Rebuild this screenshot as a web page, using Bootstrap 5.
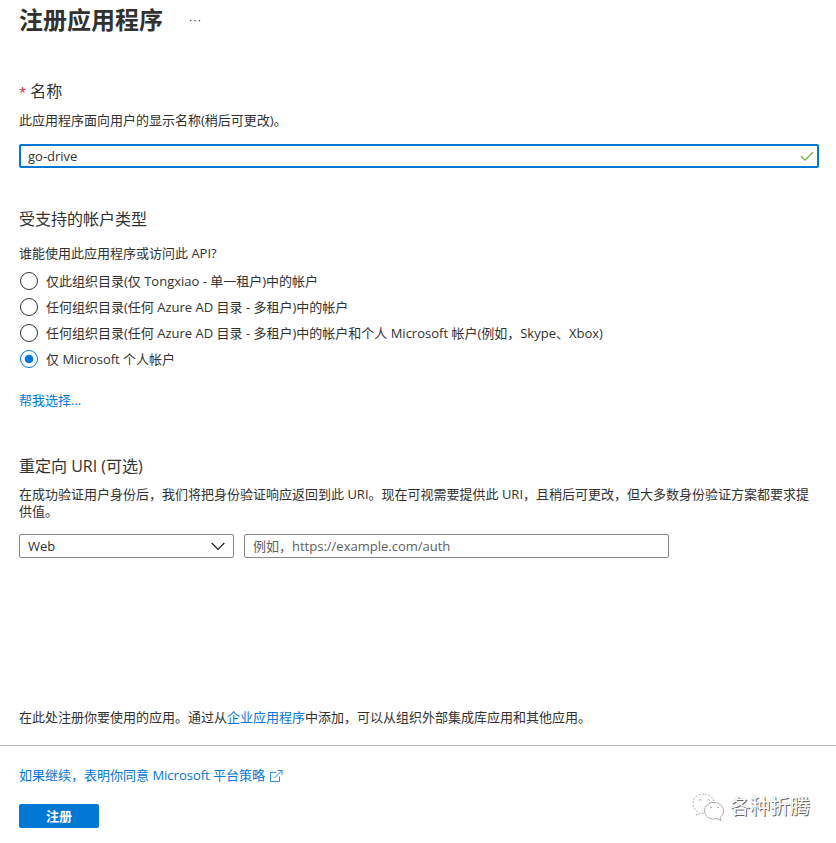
<!DOCTYPE html>
<html lang="zh-CN">
<head>
<meta charset="utf-8">
<meta name="viewport" content="width=device-width, initial-scale=1">
<title>注册应用程序</title>
<link href="https://cdn.jsdelivr.net/npm/bootstrap@5.3.0/dist/css/bootstrap.min.css" rel="stylesheet">
<style>
  :root { --ink: #323130; --azure: #0078d4; --line: #8a8886; }
  body { font: 13px/17px "Open Sans", "Noto Sans CJK SC", sans-serif; color: var(--ink); background: #fff; }
  a { color: var(--azure); text-decoration: none; }
  a:hover { text-decoration: underline; }
  .page-pad { padding-left: 19px; padding-right: 17px; }
  .page-title { font-size: 24px; line-height: 40px; font-weight: 700; }
  .section-title { font-size: 16px; line-height: 24px; font-weight: 400; margin: 0; }
  .section-gap { margin-top: 39px; }
  .section-gap-lg { margin-top: 45px; }
  .required-star { font-size: 13px; color: #e81123; }
  .form-control, .form-select { height: 24px; min-height: 24px; padding: 0 8px; font-size: 13px; line-height: 20px; color: var(--ink); border: 1px solid var(--line); border-radius: 2px; }
  .form-control::placeholder { color: #605e5c; opacity: 1; }
  .form-select { padding-right: 28px; background-position: right 8px center; background-size: 14px 14px;
    background-image: url("data:image/svg+xml,%3Csvg xmlns='http://www.w3.org/2000/svg' viewBox='0 0 14 14'%3E%3Cpath fill='none' stroke='%23201f1e' stroke-width='1.2' d='M.7 4l6.3 6.3L13.3 4'/%3E%3C/svg%3E"); }
  .name-row { margin-top: 15px; }
  .name-input, .name-input:focus { border: 2px solid var(--azure); padding: 0 30px 0 7px; box-shadow: none; }
  .valid-tick { right: 5px; top: 5px; }
  .kind-question { margin-top: 14px; margin-bottom: 6px; }
  .form-check { min-height: 26px; margin: 0; padding: 0 0 0 1px; gap: 8px; }
  .form-check .form-check-input { float: none; flex: none; width: 18px; height: 18px; margin: 0; border: 1px solid var(--ink); }
  .form-check .form-check-input:checked { border-color: var(--azure); background-color: #fff; background-size: 100% 100%;
    background-image: url("data:image/svg+xml,%3Csvg xmlns='http://www.w3.org/2000/svg' viewBox='0 0 16 16'%3E%3Ccircle cx='8' cy='8' r='4.3' fill='%230078d4'/%3E%3C/svg%3E"); }
  .help-line { margin-top: 20px; }
  .uri-row { margin-top: 14px; gap: 10px; }
  .more-btn { margin-left: 26px; line-height: 0; }
  .type-col { flex: 0 1 215px; }
  .uri-col { flex: 0 1 425px; }
  .enterprise-note { margin-top: 151px; margin-bottom: 19px; }
  .page-footer { border-top: 1px solid #bdbbb9; padding-top: 21px; }
  .register-btn { width: 80px; height: 24px; padding: 0; font-size: 13px; line-height: 22px; font-weight: 700; color: #fff; background: var(--azure); border-radius: 2px; margin-top: 20px; }
  .register-btn:hover { background: #106ebe; color: #fff; }
  .account-mark { font-size: 20px; line-height: 30px; color: #fff; padding-right: 9px; padding-bottom: 6px; gap: 6px; text-shadow: 1px 1px 0 #666, 0 0 1px #aaa; }
</style>
</head>
<body>
<main>
  <header class="page-pad d-flex align-items-center">
    <h1 class="page-title m-0">注册应用程序</h1>
    <button type="button" class="more-btn btn p-0 border-0" aria-label="更多">
      <svg width="12" height="4" viewBox="0 0 12 4" fill="#484644"><path d="M1 2h1.3v1.3H1zM5.4 2h1.3v1.3H5.4zM9.8 2h1.3v1.3H9.8z"/></svg>
    </button>
  </header>

  <form>
    <section class="page-pad section-gap">
      <h2 class="section-title"><label for="appName"><span class="required-star">*</span> 名称</label></h2>
      <p class="mt-2 mb-0" id="nameHelp">此应用程序面向用户的显示名称(稍后可更改)。</p>
      <div class="name-row position-relative">
        <input class="form-control name-input" id="appName" type="text" value="go-drive" aria-describedby="nameHelp">
        <svg class="valid-tick position-absolute" width="14" height="14" viewBox="0 0 14 14" fill="none" stroke="#6bb13c" stroke-width="1.3" aria-hidden="true"><path d="M1 7.200l4 4 8-8"/></svg>
      </div>
    </section>

    <section class="page-pad section-gap">
      <h2 class="section-title" id="kindTitle">受支持的帐户类型</h2>
      <p class="kind-question">谁能使用此应用程序或访问此 API?</p>
      <div role="radiogroup" aria-labelledby="kindTitle">
        <div class="form-check d-flex align-items-center"><input class="form-check-input" type="radio" name="kind" id="k1"><label for="k1">仅此组织目录(仅 Tongxiao - 单一租户)中的帐户</label></div>
        <div class="form-check d-flex align-items-center"><input class="form-check-input" type="radio" name="kind" id="k2"><label for="k2">任何组织目录(任何 Azure AD 目录 - 多租户)中的帐户</label></div>
        <div class="form-check d-flex align-items-center"><input class="form-check-input" type="radio" name="kind" id="k3"><label for="k3">任何组织目录(任何 Azure AD 目录 - 多租户)中的帐户和个人 Microsoft 帐户(例如，Skype、Xbox)</label></div>
        <div class="form-check d-flex align-items-center"><input class="form-check-input" type="radio" name="kind" id="k4" checked><label for="k4">仅 Microsoft 个人帐户</label></div>
      </div>
      <p class="help-line mb-0"><a href="#help">帮我选择...</a></p>
    </section>

    <section class="page-pad section-gap-lg">
      <h2 class="section-title">重定向 URI (可选)</h2>
      <p class="mt-2 mb-0">在成功验证用户身份后，我们将把身份验证响应返回到此 URI。现在可视需要提供此 URI，且稍后可更改，但大多数身份验证方案都要求提供值。</p>
      <div class="uri-row d-flex">
        <div class="type-col"><select class="form-select" aria-label="平台类型"><option>Web</option></select></div>
        <div class="uri-col"><input class="form-control" type="url" aria-label="重定向 URI" placeholder="例如，https://example.com/auth"></div>
      </div>
    </section>

    <p class="page-pad enterprise-note">在此处注册你要使用的应用。通过从<a href="#enterprise">企业应用程序</a>中添加，可以从组织外部集成库应用和其他应用。</p>

    <footer class="page-footer page-pad d-flex justify-content-between align-items-end">
      <div>
        <a class="d-flex align-items-center gap-1" href="#policy">如果继续，表明你同意 Microsoft 平台策略
          <svg width="14" height="14" viewBox="0 0 14 14" fill="none" stroke="#2b8ad9" aria-hidden="true"><path d="M7 3.500H1.500v9h9V7.500M8.500 1.500h4.500v4.500M13 1.500L5.500 9"/></svg>
        </a>
        <button type="submit" class="btn register-btn border-0 d-block">注册</button>
      </div>
      <div class="account-mark d-flex align-items-center">
        <svg width="32" height="28" viewBox="0 0 32 28" fill="#fff" stroke="#888" stroke-width=".7" aria-hidden="true">
          <path stroke-dasharray="2 1.500" d="M12 1C5.500 1 1 5 1 10.500c0 3.500 1.500 6 4.500 8L4.500 22l4-2 4 .5C22 20 23 13 22 9 21 4 17 1 12 1z"/>
          <path d="M22 9.500c-5.500 0-9.500 3.500-9.500 8.300 0 5.200 5 8.700 10 8.200l2.500-.5 4 2-1-3c2-1.500 3.500-3.800 3.500-6.700 0-4.800-4.200-8.300-9.500-8.300z"/>
          <path fill="none" d="M7 7.500q1.500-2 2.500 0M15 7.500q1.500-2 2.500 0M18 15q1-1.500 2 0M25 15q1-1.500 2 0"/>
        </svg>
        <span>各种折腾</span>
      </div>
    </footer>
  </form>
</main>
<script src="https://cdn.jsdelivr.net/npm/bootstrap@5.3.0/dist/js/bootstrap.bundle.min.js"></script>
</body>
</html>
